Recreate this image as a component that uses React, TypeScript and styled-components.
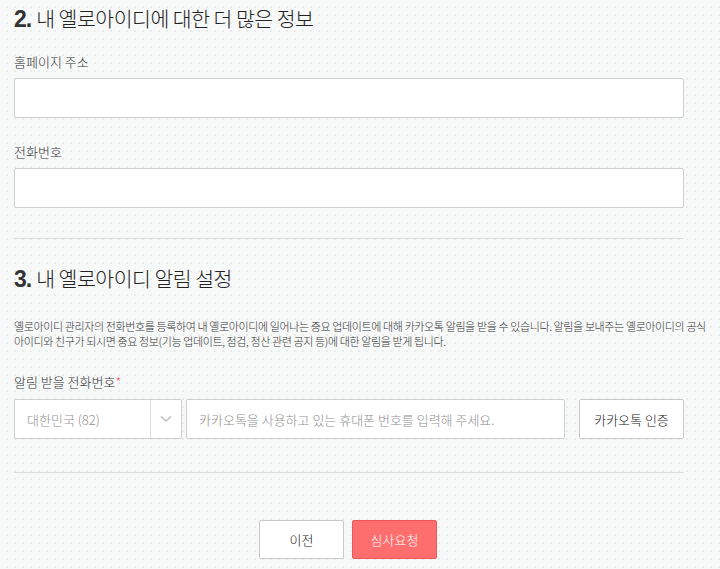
import styled, { createGlobalStyle } from "styled-components";

const GlobalStyle = createGlobalStyle`
  html, body {
    margin: 0;
    padding: 0;
  }
  body {
    background-color: #f7f8f8;
    background-image: radial-gradient(circle, #e9ebeb 0.7px, transparent 1px);
    background-size: 8px 8px;
    background-position: 3px 3px;
    font-family: "Noto Sans CJK KR", "Noto Sans", sans-serif;
    color: #333;
  }
`;

const Page = styled.div`
  width: 670px;
  margin-left: 14px;
  padding-top: 5px;
  padding-bottom: 11px;
`;

const SectionTitle = styled.h2<{ $top?: number }>`
  margin: ${(p) => p.$top ?? 0}px 0 0;
  font-size: 20.5px;
  font-weight: 300;
  line-height: 26px;
  color: #222;
  letter-spacing: -0.5px;
`;

const Num = styled.span`
  font-family: "Liberation Sans", Arial, sans-serif;
  font-weight: 700;
  font-size: 23px;
  margin-right: 5px;
  letter-spacing: -1px;
  color: #333;
`;

const Label = styled.div<{ $top: number }>`
  margin-top: ${(p) => p.$top}px;
  font-size: 13px;
  font-weight: 300;
  line-height: 18px;
  color: #333;
`;

const Star = styled.span`
  color: #f25a5a;
`;

const TextInput = styled.input`
  display: block;
  box-sizing: border-box;
  width: 100%;
  height: 40px;
  margin-top: 7px;
  border: 1px solid #cfcfcf;
  border-radius: 2px;
  background: #fff;
  padding: 0 12px;
  font-family: inherit;
  font-size: 13px;
  font-weight: 300;
  color: #333;
  outline: none;
  &::placeholder {
    color: #8f8f8f;
  }
`;

const Divider = styled.hr<{ $top: number }>`
  margin: ${(p) => p.$top}px 0 0;
  border: 0;
  border-top: 1px solid #dcdcdc;
`;

const Desc = styled.p`
  margin: 27px 0 0;
  font-size: 11px;
  font-weight: 300;
  line-height: 15px;
  color: #333;
  letter-spacing: -0.38px;
  white-space: nowrap;
`;

const PhoneRow = styled.div`
  display: flex;
  align-items: stretch;
  height: 40px;
  margin-top: 8px;
`;

const Select = styled.div`
  display: flex;
  width: 168px;
  box-sizing: border-box;
  border: 1px solid #cfcfcf;
  border-radius: 2px;
  background: #fff;
`;

const SelectValue = styled.div`
  flex: 1;
  display: flex;
  align-items: center;
  padding-left: 12px;
  font-size: 13px;
  font-weight: 300;
  color: #8f8f8f;
`;

const SelectArrow = styled.div`
  width: 30px;
  border-left: 1px solid #dcdcdc;
  display: flex;
  align-items: center;
  justify-content: center;
`;

const PhoneInput = styled(TextInput)`
  margin: 0 0 0 4px;
  width: 379px;
  height: 40px;
  flex: none;
`;

const Button = styled.button<{ $primary?: boolean }>`
  box-sizing: border-box;
  border-radius: 2px;
  font-family: inherit;
  font-size: 13px;
  font-weight: 300;
  cursor: pointer;
  border: 1px solid ${(p) => (p.$primary ? "#ee5757" : "#c9c9c9")};
  background: ${(p) => (p.$primary ? "#ff6e6e" : "#fff")};
  color: ${(p) => (p.$primary ? "#fff" : "#222")};
`;

const AuthButton = styled(Button)`
  margin-left: auto;
  width: 105px;
  height: 40px;
`;

const Actions = styled.div`
  display: flex;
  justify-content: center;
  gap: 8px;
  margin-top: 47px;
  padding-right: 2px;
`;

const ActionButton = styled(Button)`
  width: 85px;
  height: 39px;
`;

const Chevron = () => (
  <svg width="12" height="8" viewBox="0 0 12 8" fill="none">
    <path d="M1 1.5 L6 6 L11 1.5" stroke="#b5b5b5" strokeWidth="1.2" />
  </svg>
);

export default function App() {
  return (
    <>
      <GlobalStyle />
      <Page>
        <SectionTitle>
          <Num>2.</Num>내 옐로아이디에 대한 더 많은 정보
        </SectionTitle>

        <Label $top={21}>홈페이지 주소</Label>
        <TextInput type="text" />

        <Label $top={25}>전화번호</Label>
        <TextInput type="text" />

        <Divider $top={30} />

        <SectionTitle $top={26}>
          <Num>3.</Num>내 옐로아이디 알림 설정
        </SectionTitle>

        <Desc>
          옐로아이디 관리자의 전화번호를 등록하여 내 옐로아이디에 일어나는 중요 업데이트에 대해
          카카오톡 알림을 받을 수 있습니다. 알림을 보내주는 옐로아이디의 공식
          <br />
          아이디와 친구가 되시면 중요 정보(기능 업데이트, 점검, 정산 관련 공지 등)에 대한 알림을
          받게 됩니다.
        </Desc>

        <Label $top={24}>
          알림 받을 전화번호<Star>*</Star>
        </Label>
        <PhoneRow>
          <Select>
            <SelectValue>대한민국 (82)</SelectValue>
            <SelectArrow>
              <Chevron />
            </SelectArrow>
          </Select>
          <PhoneInput type="text" placeholder="카카오톡을 사용하고 있는 휴대폰 번호를 입력해 주세요." />
          <AuthButton>카카오톡 인증</AuthButton>
        </PhoneRow>

        <Divider $top={33} />

        <Actions>
          <ActionButton>이전</ActionButton>
          <ActionButton $primary>심사요청</ActionButton>
        </Actions>
      </Page>
    </>
  );
}
